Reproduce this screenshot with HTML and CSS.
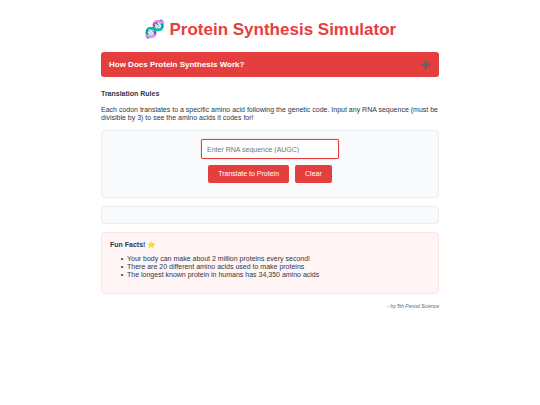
FILE: index.html
```html
<!DOCTYPE html>
<html lang="en">
<head>
    <meta charset="UTF-8">
    <meta name="viewport" content="width=device-width, initial-scale=1.0">
    <link rel="stylesheet" href="styles.css">
    <title>Protein Synthesis Simulator</title>
</head>
<body>
    <div class="container">
        <h1>🧬 Protein Synthesis Simulator</h1>
        <button class="collapsible" id="infoToggle" aria-expanded="false">
            <span>How Does Protein Synthesis Work?</span>
            <span class="plus">➕</span>
        </button>
        <div class="content" id="info" hidden>
            <p>DNA is copied into mRNA, then ribosomes read the mRNA and build a protein.</p>
        </div>

        <div class="rules">
            <h2>Translation Rules</h2>
            <p>Each codon translates to a specific amino acid following the genetic code. Input any RNA sequence (must be divisible by 3) to see the amino acids it codes for!</p>
        </div>

        <div class="simulator">
            <input type="text" id="rnaInput" placeholder="Enter RNA sequence (AUGC)" aria-label="RNA sequence">
            <div class="buttons">
                <button class="btn" id="translateBtn">Translate to Protein</button>
                <button class="btn" id="clearBtn">Clear</button>
            </div>
        </div>

        <div class="result" id="result"></div>

        <div class="facts">
            <h2>Fun Facts! ⭐</h2>
            <ul>
                <li>Your body can make about 2 million proteins every second!</li>
                <li>There are 20 different amino acids used to make proteins</li>
                <li>The longest known protein in humans has 34,350 amino acids</li>
            </ul>
        </div>
        <p class="credit">- by 5th Period Science</p>
    </div>
    <script>
        const infoToggle = document.getElementById('infoToggle');
        const info = document.getElementById('info');

        infoToggle.addEventListener('click', function() {
            info.hidden = !info.hidden;
            infoToggle.setAttribute('aria-expanded', !info.hidden);
        });

        document.getElementById('clearBtn').addEventListener('click', function() {
            document.getElementById('rnaInput').value = '';
            document.getElementById('result').textContent = '';
        });

        document.getElementById('translateBtn').addEventListener('click', function() {
            const rna = document.getElementById('rnaInput').value.toUpperCase();
            const codons = rna.match(/[AUGC]{3}/g) || [];
            document.getElementById('result').textContent = codons.map(translate).join(' - ');
        });

        function translate(codon) {
            const bases = 'UCAG';
            const acids = 'FFLLSSSSYY**CC*WLLLLPPPPHHQQRRRRIIIMTTTTNNKKSSRRVVVVAAAADDEEGGGG';
            return acids[bases.indexOf(codon[0]) * 16 + bases.indexOf(codon[1]) * 4 + bases.indexOf(codon[2])];
        }
    </script>
</body>
</html>
```
FILE: styles.css
```css
* {
    box-sizing: border-box;
}

body {
    font-family: "Liberation Sans", Arial, sans-serif;
    font-size: 7px;
    line-height: 8px;
    color: #2d3748;
    background-color: #fff;
    margin: 0;
    padding: 20px 8px;
}

.container {
    max-width: 338px;
    margin: 0 auto;
}

h1 {
    color: #e53e3e;
    font-size: 17px;
    line-height: 20px;
    text-align: center;
    margin: 0 0 12px;
}

h2 {
    font-size: 7px;
    line-height: 8px;
    margin: 0;
}

button,
input {
    font-family: inherit;
    font-size: 7px;
}

.collapsible {
    display: flex;
    justify-content: space-between;
    align-items: center;
    width: 100%;
    padding: 8px;
    font-size: 8px;
    line-height: 9px;
    font-weight: bold;
    text-align: left;
    color: #fff;
    background-color: #e53e3e;
    border: none;
    border-radius: 3px;
    cursor: pointer;
}

.content {
    padding: 8px;
}

.rules {
    margin: 13px 0 8px;
}

.rules p {
    margin: 8px 0 0;
}

.simulator,
.result,
.facts {
    background-color: #f8fafc;
    border: 1px solid #e9eef3;
    border-radius: 4px;
    margin-bottom: 8px;
    padding: 8px;
}

.simulator {
    text-align: center;
    padding-bottom: 14px;
}

.simulator input {
    width: 138px;
    height: 20px;
    padding: 0 5px;
    color: #2d3748;
    background-color: #fff;
    border: 1px solid #e53e3e;
    border-radius: 2px;
    box-shadow: 0 0 1px #e53e3e;
}

.buttons {
    display: flex;
    justify-content: center;
    gap: 6px;
    margin-top: 6px;
}

.btn {
    padding: 5px 10px;
    line-height: 8px;
    color: #fff;
    background-color: #e53e3e;
    border: none;
    border-radius: 2px;
    cursor: pointer;
}

.btn:hover {
    background-color: #c53030;
}

.facts {
    background-color: #fff5f5;
    border-color: #fbe4e6;
}

.facts h2 {
    line-height: 7px;
}

.facts ul {
    margin: 7px 0 6px;
    padding-left: 17px;
}

.facts li::marker {
    content: "•  ";
}

.credit {
    font-size: 5px;
    font-style: italic;
    color: #666;
    text-align: right;
    margin: 0;
}
```
